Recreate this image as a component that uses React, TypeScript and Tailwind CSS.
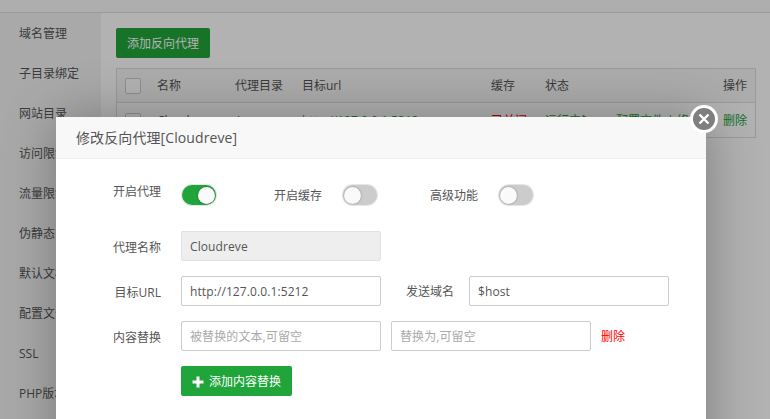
const font = 'font-["Open_Sans","Noto_Sans_CJK_SC",sans-serif]';

function Toggle({ on }: { on?: boolean }) {
  return (
    <div className={`flex h-[20px] w-[34px] items-center rounded-full px-[1px] shadow-[0_0_0_1px_#e6e6e6] ${on ? "justify-end bg-[#20a53a]" : "justify-start bg-[#cccccc]"}`}>
      <div className="h-[17px] w-[17px] rounded-full bg-[#fafafa] shadow-[0_0_2px_rgba(0,0,0,0.4)]" />
    </div>
  );
}

function Field({ value, placeholder, disabled }: { value?: string; placeholder?: string; disabled?: boolean }) {
  return (
    <input
      readOnly
      value={value ?? ""}
      placeholder={placeholder}
      className={`h-[30px] w-[200px] rounded-[2px] border pl-[8px] pr-[9px] pt-[1px] text-[12px] tracking-[0.1px] text-[#555] outline-none placeholder:text-[#aaa] ${disabled ? "border-[#e0e0ea] bg-[#eeeeee]" : "border-[#cccccc] bg-white"}`}
    />
  );
}

const sideItems = ["域名管理", "子目录绑定", "网站目录", "访问限制", "流量限制", "伪静态", "默认文档", "配置文件", "SSL", "PHP版本"];

export default function App() {
  return (
    <div className={`relative h-[419px] w-[770px] overflow-hidden bg-white text-[12px] text-[#555] ${font}`}>
      <div className="h-[13px] border-b border-[#ddd] bg-[#f9f9f9]" />
      <div className="flex h-[406px]">
        <div className="w-[101px] shrink-0 bg-[#f3f3f3] pl-[19px] pt-[1px]">
          {sideItems.map((s) => (
            <div key={s} className="flex h-[40px] items-center whitespace-nowrap">{s}</div>
          ))}
        </div>
        <div className="flex-1 pl-[15px] pr-[14px] pt-[15px]">
          <div className="flex h-[30px] w-[94px] items-center justify-center rounded-[2px] bg-[#20a53a] pt-[1px] text-white">添加反向代理</div>
          <div className="mt-[10px] border border-[#ddd]">
            <div className="flex h-[34px] items-center border-b border-[#ddd] bg-[#f6f6f6]">
              <div className="ml-[8px] h-[16px] w-[16px] rounded-[2px] border border-[#ccc] bg-white" />
              <div className="ml-[16px] w-[78px]">名称</div>
              <div className="w-[67px]">代理目录</div>
              <div className="w-[189px]">目标url</div>
              <div className="w-[54px]">缓存</div>
              <div className="flex-1">状态</div>
              <div className="pr-[8px]">操作</div>
            </div>
            <div className="flex h-[34px] items-center pt-[1px]">
              <div className="ml-[8px] h-[16px] w-[16px] rounded-[2px] border border-[#ccc] bg-white" />
              <div className="ml-[16px] w-[78px]">Cloudreve</div>
              <div className="w-[67px]">/</div>
              <div className="w-[189px] text-[#20a53a]">http://127.0.0.1:5212</div>
              <div className="w-[54px] text-[#ff0000]">已关闭</div>
              <div className="w-[71px] text-[#20a53a]">运行中▶</div>
              <div className="flex-1 whitespace-nowrap text-[#20a53a]">配置文件 | 修</div>
              <div className="pr-[8px] text-[#20a53a]">删除</div>
            </div>
          </div>
        </div>
      </div>
      <div className="absolute inset-0 bg-black/30" />
      <div className="absolute left-[56px] top-[117px] h-[400px] w-[650px] bg-white shadow-[1px_1px_50px_rgba(0,0,0,0.3)]">
        <div className="flex h-[42px] items-center border-b border-[#eeeeee] bg-[#f8f8f8] pl-[20px] text-[14px] tracking-[0.1px] text-[#555]">修改反向代理[Cloudreve]</div>
        <div className="pl-[57px] pt-[26px]">
          <div className="flex h-[20px]">
            <div className="-mt-[3px] w-[48px] leading-[20px]">开启代理</div>
            <div className="ml-[21px]"><Toggle on /></div>
            <div className="ml-[58px] w-[48px] pt-[1px] leading-[20px]">开启缓存</div>
            <div className="ml-[21px]"><Toggle /></div>
            <div className="ml-[53px] w-[48px] pt-[1px] leading-[20px]">高级功能</div>
            <div className="ml-[21px]"><Toggle /></div>
          </div>
          <div className="mt-[26px] flex items-center">
            <div className="w-[48px] pt-[3px] text-right">代理名称</div>
            <div className="ml-[20px]"><Field value="Cloudreve" disabled /></div>
          </div>
          <div className="mt-[15px] flex items-center">
            <div className="w-[48px] whitespace-nowrap pt-[3px] text-right">目标URL</div>
            <div className="ml-[20px]"><Field value="http://127.0.0.1:5212" /></div>
            <div className="ml-[25px] w-[48px] pt-[2px]">发送域名</div>
            <div className="ml-[15px]"><Field value="$host" /></div>
          </div>
          <div className="mt-[15px] flex items-center">
            <div className="w-[48px] pt-[3px] text-right">内容替换</div>
            <div className="ml-[20px]"><Field placeholder="被替换的文本,可留空" /></div>
            <div className="ml-[10px]"><Field placeholder="替换为,可留空" /></div>
            <div className="ml-[10px] pt-[2px] text-[#ff0000]">删除</div>
          </div>
          <div className="ml-[68px] mt-[15px] flex h-[30px] w-[111px] items-center justify-center gap-[5px] rounded-[2px] bg-[#20a53a] pt-[1px] text-white">
            <svg width="12" height="12" viewBox="0 0 12 12"><path d="M4.5 0.5h3v4h4v3h-4v4h-3v-4h-4v-3h4z" fill="#fff" /></svg>
            添加内容替换
          </div>
        </div>
      </div>
      <div className="absolute left-[690px] top-[105px] flex h-[28px] w-[28px] items-center justify-center rounded-full border-[3px] border-white bg-[#7f7f7f]">
        <svg width="14" height="14" viewBox="0 0 14 14"><path d="M2.5 2.5l9 9M11.5 2.5l-9 9" stroke="#fff" strokeWidth="2.4" /></svg>
      </div>
    </div>
  );
}
